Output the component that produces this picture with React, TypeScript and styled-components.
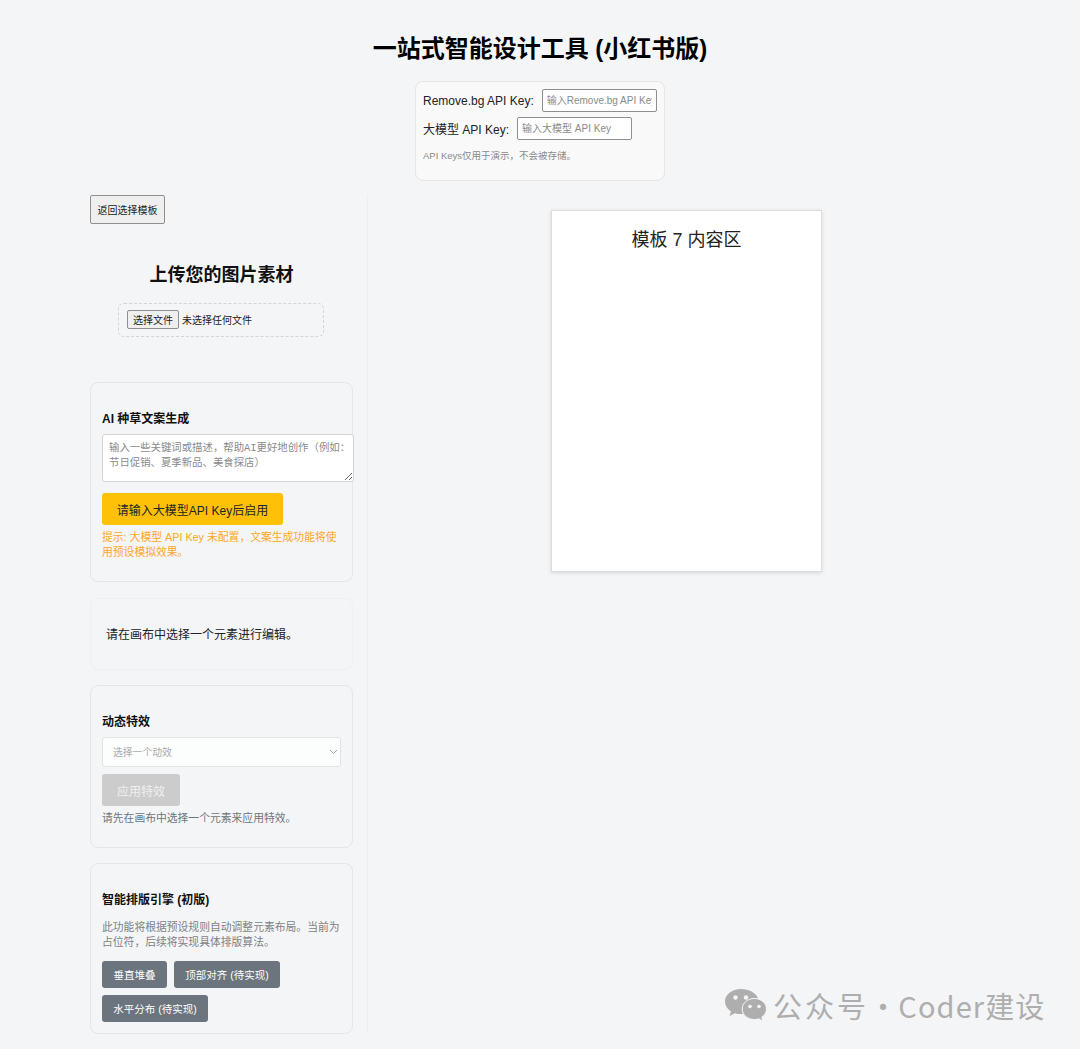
import React from "react";
import styled, { createGlobalStyle } from "styled-components";

const FONT = `"Liberation Sans", "Noto Sans CJK SC", sans-serif`;

const Global = createGlobalStyle`
  html, body { margin: 0; padding: 0; background: #f4f5f7; }
  body { font-family: ${FONT}; color: #111; }
  * { box-sizing: border-box; }
  input::placeholder, textarea::placeholder { color: #8a8a8a; opacity: 1; }
`;

const Page = styled.div`
  position: relative;
  width: 1080px;
  height: 1049px;
  overflow: hidden;
  padding-top: 35px;
`;
const Title = styled.h1`
  margin: 0;
  height: 28px;
  font-size: 24px;
  line-height: 28px;
  font-weight: 700;
  text-align: center;
  color: #000;
`;
const KeyPanel = styled.section`
  width: 250px;
  height: 100px;
  margin: 18px auto 0;
  padding: 7px 7px 0;
  background: #f9f9f9;
  border: 1px solid #e6e6e6;
  border-radius: 8px;
`;
const KeyRow = styled.label`
  display: flex;
  align-items: center;
  gap: 8px;
  height: 23px;
  margin-bottom: 5px;
  font-size: 12px;
  color: #222;
  white-space: nowrap;
`;
const KeyInput = styled.input<{ $w: number }>`
  width: ${(p) => p.$w}px;
  height: 23px;
  padding: 0 4px;
  font: 10px ${FONT};
  background: #fff;
  border: 1px solid #8f8f8f;
  border-radius: 2px;
  flex: none;
`;
const KeyNote = styled.p`
  margin: 10px 0 0;
  font-size: 9.5px;
  line-height: 12px;
  color: #8a8a8a;
`;
const Workspace = styled.main`
  display: flex;
  margin: 14px 0 0 90px;
`;
const Sidebar = styled.aside`
  width: 278px;
  height: 838px;
  padding-right: 14px;
  border-right: 1px solid #eeeff1;
`;
const BackButton = styled.button`
  display: block;
  width: 75px;
  height: 29px;
  padding: 0;
  font: 10px ${FONT};
  color: #222;
  background: #efefef;
  border: 1px solid #8f8f8f;
  border-radius: 2px;
`;
const UploadHeading = styled.h2`
  margin: 40px 0 0;
  height: 22px;
  font-size: 18px;
  line-height: 22px;
  font-weight: 700;
  text-align: center;
`;
const UploadBox = styled.div`
  display: flex;
  align-items: center;
  gap: 3px;
  width: 206px;
  height: 34px;
  margin: 17px 0 45px 28px;
  padding: 0 0 1px 8px;
  border: 1px dashed #d4d4d4;
  border-radius: 6px;
  font-size: 10px;
  color: #222;
`;
const FileButton = styled.span`
  display: flex;
  align-items: center;
  justify-content: center;
  width: 52px;
  height: 19px;
  background: #efefef;
  border: 1px solid #8f8f8f;
  border-radius: 2px;
`;
const Card = styled.section<{ $h: number; $gap: number; $light?: boolean }>`
  height: ${(p) => p.$h}px;
  margin-bottom: ${(p) => p.$gap}px;
  padding: 0 11px;
  border: 1px solid ${(p) => (p.$light ? "#f0f0f2" : "#e5e6e8")};
  border-radius: 8px;
`;
const CardTitle = styled.h3<{ $top: number }>`
  margin: ${(p) => p.$top}px 0 0;
  height: 16px;
  font-size: 12px;
  line-height: 16px;
  font-weight: 700;
`;
const Prompt = styled.textarea`
  display: block;
  width: 252px;
  height: 48px;
  margin-top: 7px;
  padding: 6px 0 4px 6px;
  font: 10.4px/15px "Liberation Mono", "Noto Sans CJK SC", monospace;
  background: #fff;
  border: 1px solid #d4d4d4;
  border-radius: 3px;
`;
const ActionButton = styled.button<{ $bg: string; $fg: string; $w: number; $top?: number }>`
  display: block;
  width: ${(p) => p.$w}px;
  height: 32px;
  margin-top: ${(p) => p.$top ?? 0}px;
  padding: 0;
  font: 12px ${FONT};
  color: ${(p) => p.$fg};
  background: ${(p) => p.$bg};
  border: 0;
  border-radius: 3px;
`;
const Hint = styled.p<{ $c: string; $top?: number }>`
  margin: ${(p) => p.$top ?? 5}px 0 0;
  font-size: 10.8px;
  line-height: 15px;
  color: ${(p) => p.$c};
`;
const Plain = styled.p`
  margin: 28px 0 0 4px;
  font-size: 12px;
  line-height: 16px;
  color: #222;
`;
const SelectBox = styled.div`
  position: relative;
  width: 239px;
  height: 30px;
  margin: 7px 0;
  padding-left: 10px;
  display: flex;
  align-items: center;
  font-size: 9.8px;
  color: #aaa;
  background: #fcfdfd;
  border: 1px solid #e2e3e5;
  border-radius: 3px;
`;
const Chevron = styled.svg`
  position: absolute;
  right: 2px;
  top: 11px;
`;
const ToolRow = styled.div`
  display: flex;
  flex-wrap: wrap;
  gap: 7px;
  margin-top: 11px;
`;
const ToolButton = styled.button<{ $w: number }>`
  width: ${(p) => p.$w}px;
  height: 27px;
  padding: 0;
  font: 10.5px ${FONT};
  color: #fff;
  background: #6c757d;
  border: 0;
  border-radius: 3px;
`;
const Stage = styled.div`
  flex: 1;
  padding: 15px 0 0 183px;
`;
const Canvas = styled.div`
  width: 271px;
  height: 362px;
  padding-top: 18px;
  background: #fff;
  border: 1px solid #dcdcdc;
  box-shadow: 0 1px 4px rgba(0, 0, 0, 0.12);
  font-size: 18px;
  line-height: 22px;
  text-align: center;
  color: #222;
`;
const Watermark = styled.div`
  position: absolute;
  left: 724px;
  top: 986px;
  display: flex;
  align-items: center;
  gap: 6px;
  font: 29px/38px "Noto Sans CJK SC", sans-serif;
  letter-spacing: 1.1px;
  word-spacing: -8px;
  color: #aeaeae;
  white-space: nowrap;
`;
const WatermarkName = styled.span`
  letter-spacing: 3px;
`;

const WeChat = () => (
  <svg width="43" height="34" viewBox="0 0 43 34" aria-hidden="true">
    <path d="M17 1C8 1 1 6.600 1 13.500c0 4 2.400 7.500 6 9.800L5.500 28l5.500-2.800c2 .6 4 .9 6 .9 1 0 1.500 0 2-.1-.5-1.400-.7-2.800-.7-4C18.300 15 24.600 10 32.500 10c.5 0 1 0 1.500.1C32 4.800 25 1 17 1z" fill="#aeaeae" />
    <path d="M42.500 21c0-6-5.700-10.500-12-10.500-6.800 0-12.300 4.500-12.300 10.500s5.500 10.500 12.300 10.500c1.500 0 3-.3 4.300-.7l4.200 2.400-1.200-4c3-2 4.700-5 4.700-8.200z" fill="#aeaeae" stroke="#f4f5f7" strokeWidth="1" />
    <circle cx="11.500" cy="9.500" r="2.200" fill="#f4f5f7" />
    <circle cx="22" cy="9.500" r="2.200" fill="#f4f5f7" />
    <circle cx="26" cy="18.500" r="1.800" fill="#f4f5f7" />
    <circle cx="35" cy="18.500" r="1.800" fill="#f4f5f7" />
  </svg>
);

export default function App() {
  return (
    <Page>
      <Global />
      <Title>一站式智能设计工具 (小红书版)</Title>
      <KeyPanel>
        <KeyRow>
          Remove.bg API Key:
          <KeyInput $w={115} placeholder="输入Remove.bg API Key" />
        </KeyRow>
        <KeyRow>
          大模型 API Key:
          <KeyInput $w={115} placeholder="输入大模型 API Key" />
        </KeyRow>
        <KeyNote>API Keys仅用于演示，不会被存储。</KeyNote>
      </KeyPanel>
      <Workspace>
        <Sidebar>
          <BackButton>返回选择模板</BackButton>
          <UploadHeading>上传您的图片素材</UploadHeading>
          <UploadBox>
            <FileButton>选择文件</FileButton>
            未选择任何文件
          </UploadBox>
          <Card $h={200} $gap={16}>
            <CardTitle $top={28}>AI 种草文案生成</CardTitle>
            <Prompt placeholder="输入一些关键词或描述，帮助AI更好地创作（例如：节日促销、夏季新品、美食探店）" />
            <ActionButton $bg="#ffc107" $fg="#212529" $w={181} $top={11}>
              请输入大模型API Key后启用
            </ActionButton>
            <Hint $c="#ffa726">提示: 大模型 API Key 未配置，文案生成功能将使用预设模拟效果。</Hint>
          </Card>
          <Card $h={72} $gap={15} $light>
            <Plain>请在画布中选择一个元素进行编辑。</Plain>
          </Card>
          <Card $h={163} $gap={15}>
            <CardTitle $top={28}>动态特效</CardTitle>
            <SelectBox>
              选择一个动效
              <Chevron width="9" height="6" viewBox="0 0 9 6" aria-hidden="true">
                <path d="M1 1l3.500 3.500L8 1" fill="none" stroke="#aaa" strokeWidth="1" />
              </Chevron>
            </SelectBox>
            <ActionButton $bg="#cccccc" $fg="#f0f0f0" $w={78}>应用特效</ActionButton>
            <Hint $c="#6c757d">请先在画布中选择一个元素来应用特效。</Hint>
          </Card>
          <Card $h={171} $gap={0}>
            <CardTitle $top={28}>智能排版引擎 (初版)</CardTitle>
            <Hint $c="#7c8389" $top={12}>此功能将根据预设规则自动调整元素布局。当前为占位符，后续将实现具体排版算法。</Hint>
            <ToolRow>
              <ToolButton $w={65}>垂直堆叠</ToolButton>
              <ToolButton $w={106}>顶部对齐 (待实现)</ToolButton>
              <ToolButton $w={106}>水平分布 (待实现)</ToolButton>
            </ToolRow>
          </Card>
        </Sidebar>
        <Stage>
          <Canvas>模板 7 内容区</Canvas>
        </Stage>
      </Workspace>
      <Watermark>
        <WeChat />
        <span><WatermarkName>公众号</WatermarkName> · Coder建设</span>
      </Watermark>
    </Page>
  );
}
